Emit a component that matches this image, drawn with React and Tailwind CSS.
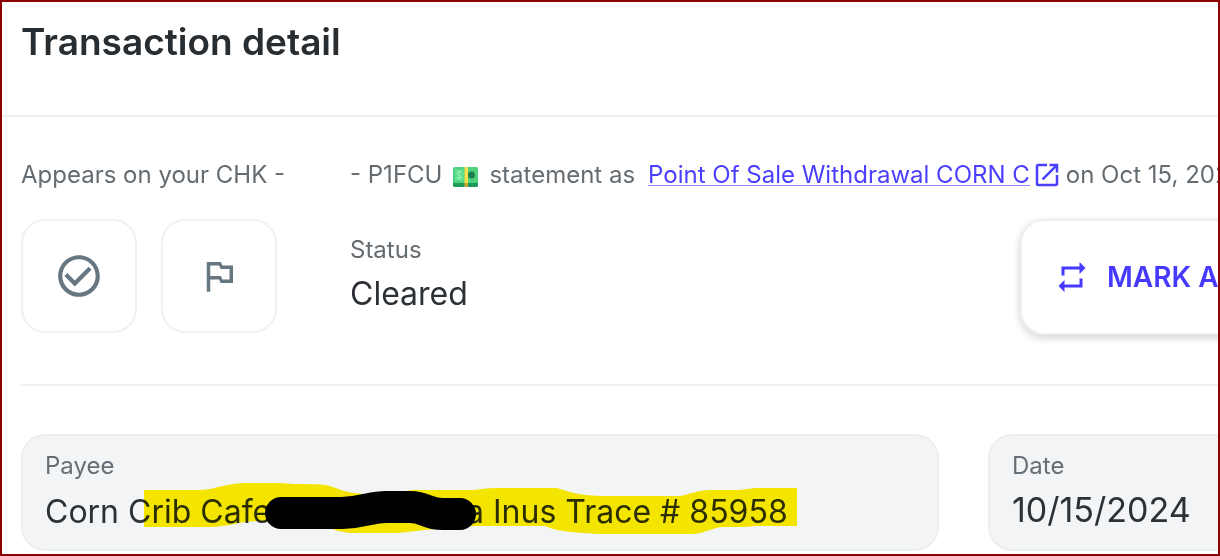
import { MdCheckCircleOutline, MdOutlinedFlag, MdOpenInNew, MdRepeat } from "react-icons/md";

function CashIcon() {
  return (
    <svg className="mx-[11px] mt-1 inline-block h-5 w-[25px] shrink-0" viewBox="0 0 25 20" role="img" aria-label="cash">
      <rect x="0" y="1" width="25" height="19" rx="1.5" fill="#1f9a5a" />
      <rect x="0" y="0" width="25" height="16" rx="1.5" fill="#4fd07d" />
      <rect x="2" y="2" width="9" height="12" fill="#5fe08f" />
      <path d="M8 5.500C7 4 4.500 4.500 4.800 6.500S8 8 7.500 10 5 12 4.500 10.500" fill="none" stroke="#a5f0bd" strokeWidth="1.200" />
      <circle cx="18.500" cy="8" r="3.500" fill="#1f7a4f" />
      <rect x="11.500" y="0" width="3.500" height="16" fill="#f5e04a" />
      <rect x="11.500" y="16" width="3.500" height="4" fill="#c9a83a" />
    </svg>
  );
}

function IconButton({ label, children }) {
  return (
    <button
      type="button"
      aria-label={label}
      className="flex h-[114px] w-[116px] shrink-0 items-center justify-center rounded-3xl border-2 border-[#eff2f2] text-[#667781]"
    >
      {children}
    </button>
  );
}

function Field({ id, label, value, className, inputClassName, children }) {
  return (
    <div className={`relative h-[117px] rounded-3xl border-2 border-[#eceff0] bg-[#f3f4f6] px-[22px] pt-3.5 ${className}`}>
      <label htmlFor={id} className="block text-2xl leading-8 text-[#666e75]">
        {label}
      </label>
      <input
        id={id}
        defaultValue={value}
        className={`mt-1.5 block w-full bg-transparent outline-none ${inputClassName}`}
      />
      {children}
    </div>
  );
}

function Highlight() {
  return (
    <svg
      className="pointer-events-none absolute left-[121px] top-[46px] h-[54px] w-[656px] mix-blend-multiply"
      viewBox="144 482 656 54"
      aria-hidden="true"
    >
      <path
        d="M144 490H200C218 489 222 484 245 483H280C300 485 320 483 330 486C345 492 355 494 370 494L415 490H475C480 489 488 488 500 488H557C570 492 580 496 605 496H680C690 494 700 490 710 490H740L755 488H797V526H755L745 527H722C712 528 705 533 693 534H595C580 532 560 533 545 526H475L424 530C410 532 400 533 395 533H355C345 533 338 531 332 529L260 521C238 521 230 527 210 527H144Z"
        fill="#fff000"
      />
    </svg>
  );
}

function Redaction() {
  return (
    <svg
      className="pointer-events-none absolute left-[240px] top-[52px] h-11 w-[216px]"
      viewBox="263 488 216 44"
      aria-hidden="true"
    >
      <path
        d="M281 513H342C366 512 370 507 386 507H410C426 507 426 514 443 514H460"
        fill="none"
        stroke="#000"
        strokeWidth="32"
        strokeLinecap="round"
      />
    </svg>
  );
}

const payee = "Corn Crib Cafe" + " ".repeat(21) + "\u2009a Inus Trace # 85958";

export default function App() {
  return (
    <main className="min-h-screen overflow-hidden border-2 border-[#8b0000] bg-white font-['Inter','Roboto',sans-serif] text-[#2c3136]">
      <header className="border-b-2 border-[#f0f0f1] px-[19px] pb-[51px] pt-[18px]">
        <h1 className="text-[37px] font-semibold leading-[44px] text-[#282d32]">Transaction detail</h1>
      </header>

      <div className="-mr-[300px] px-[19px] pt-10">
        <p className="flex h-9 items-center whitespace-nowrap text-2xl text-[#646c72]">
          <span className="w-[329px] shrink-0">Appears on your CHK -</span>
          <span>- P1FCU</span>
          <CashIcon />
          <span>statement as</span>
          <a href="#statement" className="ml-[13px] flex items-center gap-0.5 text-[#4a3fff]">
            <span className="border-b border-b-[#8f88ff] leading-5">Point Of Sale Withdrawal CORN C</span>
            <MdOpenInNew className="size-[30px]" />
          </a>
          <span className="ml-1">on Oct 15, 2024</span>
        </p>

        <section className="mt-[26px] flex items-start border-b-2 border-[#eff2f2] pb-[49px]">
          <IconButton label="Mark as reviewed">
            <MdCheckCircleOutline className="size-[50px]" />
          </IconButton>
          <div className="ml-6">
            <IconButton label="Flag">
              <MdOutlinedFlag className="size-[42px]" />
            </IconButton>
          </div>
          <dl className="ml-[73px] pt-[15px]">
            <dt className="text-2xl leading-8 text-[#646c72]">Status</dt>
            <dd className="mt-1 text-[32px] leading-[48px]">Cleared</dd>
          </dl>
          <button
            type="button"
            className="ml-auto flex h-[116px] w-[479px] shrink-0 items-center gap-[17px] whitespace-nowrap rounded-3xl border-2 border-[#eceff0] px-8 text-[28px] font-semibold text-[#463aff] shadow-[0_3px_8px_rgba(0,0,0,0.18)]"
          >
            <MdRepeat className="size-9" />
            MARK AS RECURRING
          </button>
        </section>

        <form className="mt-12 flex gap-[49px]">
          <Field
            id="payee"
            label="Payee"
            value={payee}
            className="min-w-0 flex-1"
            inputClassName="text-[32px] leading-[48px]"
          >
            <Highlight />
            <Redaction />
          </Field>
          <Field
            id="date"
            label="Date"
            value="10/15/2024"
            className="w-[511px] shrink-0"
            inputClassName="text-[34px] leading-[44px]"
          />
        </form>
      </div>
    </main>
  );
}
